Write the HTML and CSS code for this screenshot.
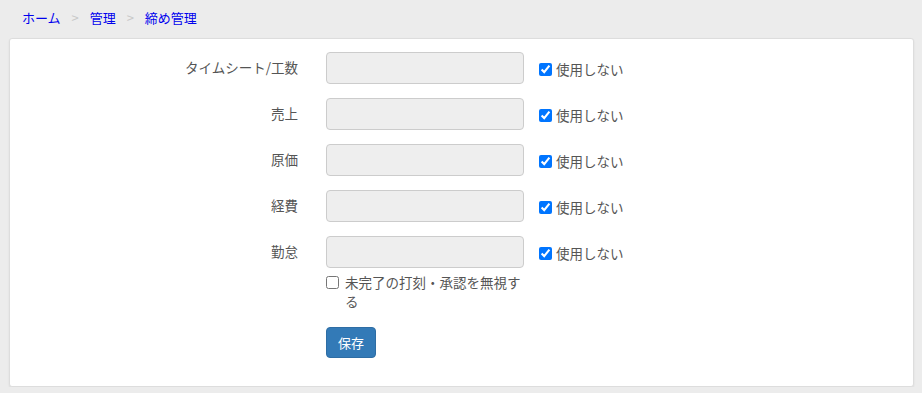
FILE: index.html
```html
<!DOCTYPE html>
<html lang="ja">
<head>
  <meta charset="UTF-8">
  <title>締め管理</title>
  <link rel="stylesheet" href="styles.css">
</head>
<body>
  <div class="breadcrumb">
    <a href="#">ホーム</a>
    <span class="sep">&gt;</span>
    <a href="#">管理</a>
    <span class="sep">&gt;</span>
    <a href="#">締め管理</a>
  </div>
  <div class="panel">
    <form class="closing-form">
      <div class="form-row">
        <label class="form-label">タイムシート/工数</label>
        <div class="form-field"><input type="text" class="form-input" disabled></div>
        <label class="form-check"><input type="checkbox" checked> 使用しない</label>
      </div>
      <div class="form-row">
        <label class="form-label">売上</label>
        <div class="form-field"><input type="text" class="form-input" disabled></div>
        <label class="form-check"><input type="checkbox" checked> 使用しない</label>
      </div>
      <div class="form-row">
        <label class="form-label">原価</label>
        <div class="form-field"><input type="text" class="form-input" disabled></div>
        <label class="form-check"><input type="checkbox" checked> 使用しない</label>
      </div>
      <div class="form-row">
        <label class="form-label">経費</label>
        <div class="form-field"><input type="text" class="form-input" disabled></div>
        <label class="form-check"><input type="checkbox" checked> 使用しない</label>
      </div>
      <div class="form-row">
        <label class="form-label">勤怠</label>
        <div class="form-field">
          <input type="text" class="form-input" disabled>
          <label class="sub-check"><input type="checkbox"><span>未完了の打刻・承認を無視する</span></label>
        </div>
        <label class="form-check"><input type="checkbox" checked> 使用しない</label>
      </div>
      <div class="form-row">
        <div class="form-label"></div>
        <div class="form-field"><button type="button" class="btn-save">保存</button></div>
      </div>
    </form>
  </div>
</body>
</html>
```

FILE: styles.css
```css
body {
  margin: 0;
  background-color: #ececec;
  font-family: "Noto Sans CJK JP", "Noto Sans", sans-serif;
  font-size: 13.5px;
  color: #555;
}
.breadcrumb {
  padding: 8px 22px 0 22px;
  height: 30px;
  line-height: 20px;
  box-sizing: border-box;
  font-size: 13px;
}
.breadcrumb a {
  color: #0000ee;
  text-decoration: none;
}
.breadcrumb .sep {
  color: #c8c8c8;
  margin: 0 8px;
}
.panel {
  margin: 8px 8px 0 9px;
  background-color: #fff;
  border: 1px solid #ddd;
  border-radius: 3px;
  box-shadow: 0 1px 2px rgba(0, 0, 0, 0.08);
  padding: 13px 0 28px 0;
}
.closing-form {
  display: flex;
  flex-direction: column;
  gap: 14px;
}
.form-row {
  display: grid;
  grid-template-columns: 288px 198px auto;
  column-gap: 28px;
  align-items: start;
}
.form-row:last-child {
  margin-top: 2px;
}
.form-label {
  text-align: right;
  padding-top: 5px;
  line-height: 20px;
  color: #555;
}
.form-field {
  display: flex;
  flex-direction: column;
}
.form-input {
  width: 198px;
  height: 32px;
  box-sizing: border-box;
  background-color: #eee;
  border: 1px solid #ccc;
  border-radius: 4px;
  margin: 0;
}
.form-check {
  display: flex;
  align-items: center;
  gap: 4px;
  margin-left: -13px;
  padding-top: 7px;
  line-height: 20px;
  color: #555;
}
.form-check input,
.sub-check input {
  width: 13px;
  height: 13px;
  margin: 0;
}
.sub-check {
  display: flex;
  align-items: flex-start;
  gap: 6px;
  margin-top: 5px;
  line-height: 19px;
  color: #555;
}
.sub-check input {
  margin-top: 3px;
}
.btn-save {
  width: 50px;
  height: 31px;
  background-color: #337ab7;
  border: 1px solid #2e6da4;
  border-radius: 4px;
  color: #fff;
  font-family: "Noto Sans CJK JP", "Noto Sans", sans-serif;
  font-size: 13px;
  padding: 0;
}
```
